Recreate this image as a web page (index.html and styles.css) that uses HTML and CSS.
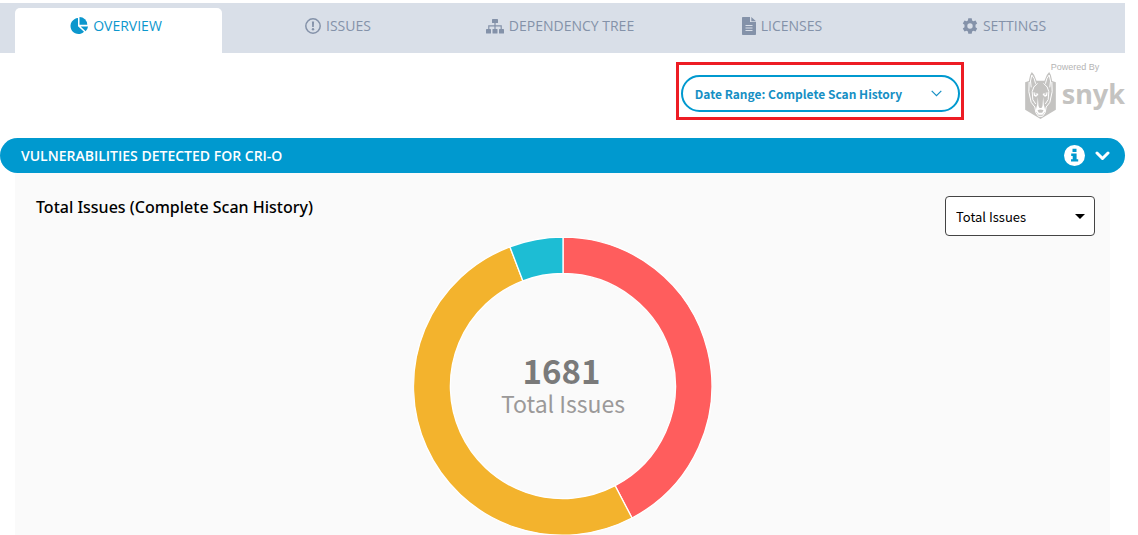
FILE: index.html
```html
<!DOCTYPE html>
<html lang="en">
<head>
<meta charset="utf-8">
<title>Vulnerability Overview</title>
<link rel="stylesheet" href="styles.css">
</head>
<body>
<div class="page">
  <nav class="tabs">
    <a class="tab tab-active" href="#overview">
      <svg width="18" height="18" viewBox="0 0 18 18" fill="currentColor"><path d="M8 1v8.300l6 5.500A8 8 0 1 1 8 1z"/><path d="M9.500 0a8 8 0 0 1 7.800 7.800H9.500z"/><path d="M10.600 9.400H18a8 8 0 0 1-2.400 4.800z"/></svg>
      <span>OVERVIEW</span>
    </a>
    <a class="tab" href="#issues">
      <svg width="16" height="16" viewBox="0 0 16 16"><circle cx="8" cy="8" r="7.200" fill="none" stroke="currentColor" stroke-width="1.500"/><path d="M6.900 3.500h2.200l-.3 5.600H7.200z" fill="currentColor"/><circle cx="8" cy="11.300" r="1.200" fill="currentColor"/></svg>
      <span>ISSUES</span>
    </a>
    <a class="tab" href="#dependencies">
      <svg width="18" height="16" viewBox="0 0 18 16" fill="currentColor"><rect x="6" y="1" width="6" height="4" rx=".6"/><path d="M8.400 5h1.200v2.200h6.200V11h-1.200V8.400h-5V11H8.400V8.400h-5V11H2.200V7.200h6.200z"/><rect x="0" y="11" width="5" height="4.500" rx=".6"/><rect x="6.500" y="11" width="5" height="4.500" rx=".6"/><rect x="13" y="11" width="5" height="4.500" rx=".6"/></svg>
      <span>DEPENDENCY TREE</span>
    </a>
    <a class="tab" href="#licenses">
      <svg width="14" height="18" viewBox="0 0 14 18" fill="currentColor"><path fill-rule="evenodd" d="M.8 0H8v5h6v12.200a.8.800 0 0 1-.8.800H.8a.8.800 0 0 1-.8-.8V.8A.8.800 0 0 1 .8 0zM3.500 8v1h7V8zm0 2.500v1h7v-1zm0 2.500v1h7v-1z"/><path d="M9.300 0L14 4.200H9.300z"/></svg>
      <span>LICENSES</span>
    </a>
    <a class="tab" href="#settings">
      <svg width="16" height="16" viewBox="0 0 16 16" fill="currentColor"><path fill-rule="evenodd" d="M6.300.3h3.400l.4 2.200 1.300.7 2.100-.8 1.700 3-1.700 1.400v2.400l1.700 1.400-1.700 3-2.100-.8-1.300.7-.4 2.200H6.300l-.4-2.200-1.300-.7-2.100.8-1.700-3 1.700-1.400V6.800L.8 5.400l1.700-3 2.100.8 1.300-.7zM8 5.300a2.700 2.700 0 1 0 0 5.400 2.700 2.700 0 0 0 0-5.400z"/></svg>
      <span>SETTINGS</span>
    </a>
  </nav>

  <div class="toolbar">
    <div class="highlight">
      <button class="range" type="button">
        <span>Date Range: Complete Scan History</span>
        <svg width="11" height="7" viewBox="0 0 11 7" fill="none" stroke="currentColor" stroke-width="1.200"><path d="M.7.800l4.800 4.800L10.300.800"/></svg>
      </button>
    </div>
    <div class="brand">
      <span class="powered">Powered By</span>
      <div class="logo">
        <svg width="31" height="47" viewBox="48 67 92 141">
          <path fill="#c4c3c1" d="M48 98l11-4 4-18 5-9 7 9 7 17h24l7-17 7-9 5 9 4 18 11 4v82l-46 28-46-28z"/>
          <g fill="none" stroke="#fff" stroke-width="3" stroke-linejoin="round" stroke-linecap="round">
            <path d="M66 112l-2-18 4-18 7 11 4 14M122 112l2-18-4-18-7 11-4 14"/>
            <path d="M60 98l-1 28 7 32 11 14 3 17 8 11h12l8-11 3-17 11-14 7-32-1-28"/>
            <path d="M84 102l-10 10-5 14 2 24 8 12M104 102l10 10 5 14-2 24-8 12"/>
          </g>
          <path fill="#fff" d="M73 128l14 4v5l-4 1-2 4-7-4zM115 128l-14 4v5l4 1 2 4 7-4zM86 141l-2 24-5 19 9 11h12l9-11-5-19-2-24-2 28-3 6h-6l-3-6z"/>
          <path fill="#c4c3c1" d="M85 182q9-5 18 0l-4 7H89zM76 131h6v4h-4zM112 131h-6v4h4z"/>
        </svg>
        <span class="wordmark">snyk</span>
      </div>
    </div>
  </div>

  <section>
    <header class="section-head">
      <h2>VULNERABILITIES DETECTED FOR CRI-O</h2>
      <div class="head-actions">
        <button class="icon-button" type="button" aria-label="Information">
          <svg width="21" height="21" viewBox="0 0 21 21"><circle cx="10.500" cy="10.500" r="10.500" fill="#fff"/><path fill="#0099cf" d="M8.500 3.700h4v3.300h-4zM7.200 8.600h5.400v5.700h1.600v2.300H7v-2.300h1.700v-3.400H7.200z"/></svg>
        </button>
        <button class="icon-button" type="button" aria-label="Collapse section">
          <svg width="15" height="10" viewBox="0 0 15 10" fill="none" stroke="#fff" stroke-width="3" stroke-linecap="round" stroke-linejoin="round"><path d="M2 2l5.500 5.500L13 2"/></svg>
        </button>
      </div>
    </header>
    <div class="panel">
      <div class="panel-head">
        <h3>Total Issues (Complete Scan History)</h3>
        <select class="metric" aria-label="Metric">
          <option>Total Issues</option>
        </select>
      </div>
      <svg class="donut" width="298" height="298" viewBox="0 0 298 298" role="img" aria-label="1681 total issues">
        <g stroke="#fff" stroke-width="1.300">
          <path fill="#ff5d5d" d="M149 0A149 149 0 0 1 218 281L201.100 248.700A112.500 112.500 0 0 0 149 36.500z"/>
          <path fill="#f3b32d" d="M218 281A149 149 0 1 1 95.900 9.800L108.900 43.900A112.500 112.500 0 1 0 201.100 248.700z"/>
          <path fill="#1dbdd4" d="M95.900 9.800A149 149 0 0 1 149 0V36.500A112.500 112.500 0 0 0 108.900 43.900z"/>
        </g>
        <text class="donut-text">
          <tspan class="donut-value" x="149" y="147">1681</tspan>
          <tspan class="donut-label" x="149" y="176">Total Issues</tspan>
        </text>
      </svg>
    </div>
  </section>
</div>
</body>
</html>
```

FILE: styles.css
```css
* {
  box-sizing: border-box;
}

body {
  margin: 0;
  background: #fff;
  font-family: "Open Sans", "Noto Sans", sans-serif;
  font-size: 14px;
}

.page {
  padding: 3px 13px 0 0;
}

.tabs {
  display: grid;
  grid-template-columns: repeat(5, 1fr);
  gap: 15px;
  padding: 5px 15px 0;
  background: #d9dfe8;
}

.tab {
  display: flex;
  align-items: center;
  justify-content: center;
  gap: 5px;
  height: 45px;
  padding: 0 5px 10px 0;
  border-radius: 5px 5px 0 0;
  color: #8492a9;
  text-decoration: none;
}

.tab-active {
  background: #fff;
  color: #0c97cd;
}

.toolbar {
  display: flex;
  justify-content: flex-end;
  align-items: flex-start;
  gap: 61px;
  height: 85px;
  padding-top: 9px;
}

.highlight {
  padding: 10px 1px 5px 2px;
  border: 3px solid #ed1c24;
}

.range {
  display: flex;
  align-items: center;
  justify-content: space-between;
  width: 279px;
  height: 37px;
  padding: 0 16px 1px 12px;
  border: 2px solid #0099cf;
  border-radius: 19px;
  background: #fff;
  color: #168fc4;
  font-family: "Noto Sans CJK SC", sans-serif;
  font-size: 12px;
  font-weight: 700;
}

.brand {
  display: flex;
  flex-direction: column;
}

.powered {
  padding-left: 26px;
  color: #b4b4b4;
  font-family: "Liberation Sans", sans-serif;
  font-size: 9px;
  line-height: 10px;
}

.logo {
  display: flex;
  align-items: flex-start;
  gap: 6px;
}

.wordmark {
  color: #c4c3c1;
  font-family: "Noto Sans", sans-serif;
  font-size: 27px;
  font-weight: 700;
  line-height: 44px;
}

.section-head {
  display: flex;
  align-items: center;
  justify-content: space-between;
  height: 35px;
  padding: 0 15px 0 21px;
  border-radius: 18px;
  background: #0099cf;
  color: #fff;
}

h2,
h3 {
  margin: 0;
}

h2 {
  font-size: 14px;
  font-weight: 600;
}

.head-actions {
  display: flex;
  align-items: center;
  gap: 10px;
}

.icon-button {
  display: flex;
  padding: 0;
  border: 0;
  background: none;
}

.panel {
  margin: 0 15px;
  padding-top: 23px;
  background: #fafafa;
}

.panel-head {
  display: flex;
  align-items: flex-start;
  justify-content: space-between;
  padding: 0 15px 0 21px;
}

h3 {
  font-family: "Noto Sans", sans-serif;
  font-size: 16px;
  font-weight: 500;
  line-height: 22px;
}

.metric {
  appearance: none;
  width: 150px;
  height: 40px;
  padding: 0 10px;
  border: 1px solid #444;
  border-radius: 4px;
  background: url("data:image/svg+xml,%3Csvg xmlns='http://www.w3.org/2000/svg' width='10' height='5'%3E%3Cpath d='M0 0h10L5 5z'/%3E%3C/svg%3E") right 9px center no-repeat, #fff;
  color: #000;
  font-family: "Noto Sans CJK SC", sans-serif;
  font-size: 13px;
}

.donut {
  display: block;
  margin: 1px auto 0;
}

.donut-text {
  font-family: "Noto Sans CJK SC", sans-serif;
  text-anchor: middle;
}

.donut-value {
  fill: #7a7a7a;
  font-size: 33px;
  font-weight: 700;
}

.donut-label {
  fill: #9b9999;
  font-size: 23px;
}
```
